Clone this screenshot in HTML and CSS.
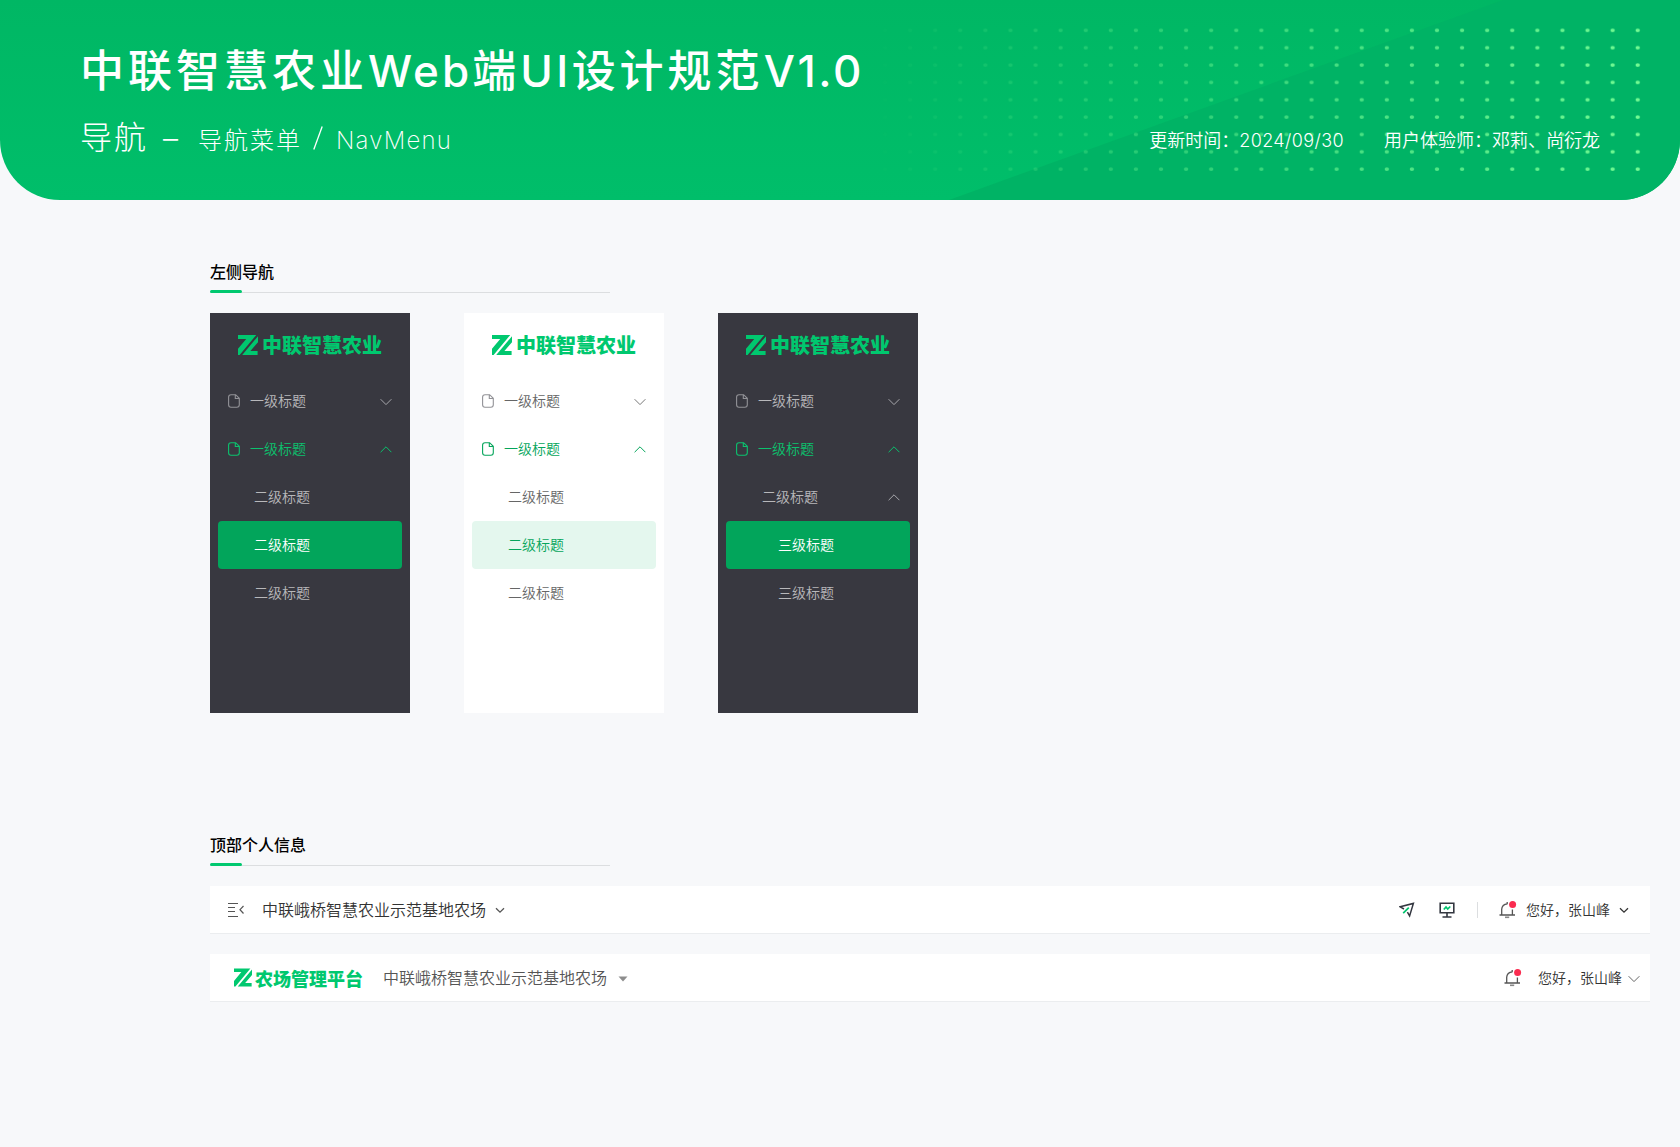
FILE: index.html
```html
<!DOCTYPE html>
<html lang="zh-CN">
<head>
<meta charset="utf-8">
<title>导航菜单 / NavMenu</title>
<link rel="stylesheet" href="styles.css">
</head>
<body>
<svg width="0" height="0" class="defs" aria-hidden="true">
  <symbol id="mark" viewBox="0 0 20 20"><path d="M0 0H18.2L1.6 20H0V13.8L8.2 4H0ZM20 1.2V7.2L12.4 16H19.6V20H4.2Z"/></symbol>
  <symbol id="doc" viewBox="0 0 14 16"><path d="M4 1.7H8.6L12.3 5.3V11.8Q12.3 14.3 9.8 14.3H4Q1.6 14.3 1.6 11.8V4.1Q1.6 1.7 4 1.7ZM8.3 1.8V5.5H12.2" fill="none" stroke="currentColor" stroke-width="1.1"/></symbol>
  <symbol id="down" viewBox="0 0 12 8"><path d="M.6 1.2 6 6.6 11.4 1.2" fill="none" stroke="currentColor"/></symbol>
  <symbol id="down-bold" viewBox="0 0 10 7"><path d="M1 1.2 5 5.2 9 1.2" fill="none" stroke="currentColor" stroke-width="1.3"/></symbol>
  <symbol id="up" viewBox="0 0 12 8"><path d="M.6 6.2 6 .8 11.4 6.2" fill="none" stroke="currentColor"/></symbol>
  <symbol id="bell" viewBox="0 0 18 18"><path d="M.5 14H16M2.7 14V8.2Q2.9 3.4 8.5 2.8M13.4 14V8.5M8.2 1V3" fill="none" stroke="#555" stroke-width="1.3"/><path d="M6 16.3H10.2" stroke="#888" stroke-width="1.6"/><circle cx="13.6" cy="3.6" r="3.5" fill="#fa2c50"/></symbol>
</svg>
<header class="banner">
  <svg class="pattern" viewBox="0 0 1680 200">
    <defs>
      <linearGradient id="fade" gradientUnits="userSpaceOnUse" x1="870" y1="0" x2="1640" y2="0"><stop offset="0" stop-color="#fff" stop-opacity="0"/><stop offset="1" stop-color="#fff"/></linearGradient>
      <mask id="m" maskUnits="userSpaceOnUse" x="860" y="0" width="820" height="200"><rect x="860" width="820" height="200" fill="url(#fade)"/></mask>
      <pattern id="dots" patternUnits="userSpaceOnUse" x="872.5" y="21.6" width="25.09" height="17.35"><ellipse cx="12.5" cy="8.7" rx="2.2" ry="1.8" fill="#73fb93"/></pattern>
    </defs>
    <path d="M949 200 1503 0H1680V200Z" fill="#00b365"/>
    <rect x="872.5" y="21.6" width="777.7" height="156.1" fill="url(#dots)" mask="url(#m)"/>
  </svg>
  <h1>中联智慧农业<span class="web">Web</span>端<span class="ui">UI</span>设计规范<span class="ver">V1.0</span></h1>
  <div class="subline">
    <p class="crumb"><span class="big">导航</span><span class="dash">–</span><span>导航菜单</span><svg class="slash" viewBox="0 0 10 24"><path d="M.8 23.5 9.2.5" stroke="#fff" stroke-width="1.3"/></svg><span class="nav">NavMenu</span></p>
    <p class="meta"><span>更新时间：<span class="date">2024/09/30</span></span><span class="author">用户体验师：邓莉、尚衍龙</span></p>
  </div>
</header>
<main>
  <section class="side">
    <h2>左侧导航</h2>
    <div class="menus">
      <nav class="menu dark">
        <div class="logo"><svg><use href="#mark"/></svg><b>中联智慧农业</b></div>
        <div class="item"><svg class="doc"><use href="#doc"/></svg>一级标题<svg class="arrow"><use href="#down"/></svg></div>
        <div class="item open"><svg class="doc"><use href="#doc"/></svg>一级标题<svg class="arrow"><use href="#up"/></svg></div>
        <div class="item second">二级标题</div>
        <div class="item second active">二级标题</div>
        <div class="item second">二级标题</div>
      </nav>
      <nav class="menu light">
        <div class="logo"><svg><use href="#mark"/></svg><b>中联智慧农业</b></div>
        <div class="item"><svg class="doc"><use href="#doc"/></svg>一级标题<svg class="arrow"><use href="#down"/></svg></div>
        <div class="item open"><svg class="doc"><use href="#doc"/></svg>一级标题<svg class="arrow"><use href="#up"/></svg></div>
        <div class="item second">二级标题</div>
        <div class="item second active">二级标题</div>
        <div class="item second">二级标题</div>
      </nav>
      <nav class="menu dark">
        <div class="logo"><svg><use href="#mark"/></svg><b>中联智慧农业</b></div>
        <div class="item"><svg class="doc"><use href="#doc"/></svg>一级标题<svg class="arrow"><use href="#down"/></svg></div>
        <div class="item open"><svg class="doc"><use href="#doc"/></svg>一级标题<svg class="arrow"><use href="#up"/></svg></div>
        <div class="item second">二级标题<svg class="arrow"><use href="#up"/></svg></div>
        <div class="item third active">三级标题</div>
        <div class="item third">三级标题</div>
      </nav>
    </div>
  </section>
  <section class="top">
    <h2>顶部个人信息</h2>
    <div class="bar first">
      <svg class="fold" viewBox="0 0 18 16"><path d="M1 1.5H11M1 5.5H8M1 9.5H8M1 14.5H11M16.5 4 13 7.7 16.5 11.5" fill="none" stroke="#555" stroke-width="1.2"/></svg>
      <span class="farm">中联峨桥智慧农业示范基地农场</span>
      <svg class="caret"><use href="#down-bold"/></svg>
      <svg class="plane" viewBox="0 0 16 16"><path d="M5 7 1.2 4.8 14.4 1.4 10.6 14 8.4 10.2" fill="none" stroke="#333740" stroke-width="1.5"/><path d="M4.2 11.2 9.8 5.6" stroke="#00c46e" stroke-width="1.7"/></svg>
      <svg class="screen" viewBox="0 0 16 16"><path d="M1.2 1.2H14.8V10.8H1.2ZM8 11V15M3.5 15H12.5" fill="none" stroke="#333740" stroke-width="1.6"/><path d="M4.8 7.5 7 5 8.7 7 11.3 4.5" fill="none" stroke="#00c46e" stroke-width="1.7"/></svg>
      <i class="divider"></i>
      <svg class="bell"><use href="#bell"/></svg>
      <span class="user">您好，张山峰</span>
      <svg class="ucaret"><use href="#down-bold"/></svg>
    </div>
    <div class="bar last">
      <div class="logo"><svg><use href="#mark"/></svg><b>农场管理平台</b></div>
      <span class="farm">中联峨桥智慧农业示范基地农场</span>
      <svg class="tri" viewBox="0 0 10 6"><path d="M.5.5H9.5L5 5.5Z" fill="#8d8d8d"/></svg>
      <svg class="bell"><use href="#bell"/></svg>
      <span class="user">您好，张山峰</span>
      <svg class="ucaret"><use href="#down"/></svg>
    </div>
  </section>
</main>
</body>
</html>
```
FILE: styles.css
```css
* { box-sizing: border-box; }
body, h1, h2, p { margin: 0; }
body {
  min-height: 1147px;
  background: #f7f8fa;
  color: #333;
  font: 350 14px/20px "Noto Sans CJK SC", sans-serif;
}
.defs { position: absolute; }
svg { display: block; flex: none; }

.banner {
  position: relative;
  height: 200px;
  padding: 38px 80px 0;
  overflow: hidden;
  border-radius: 0 0 60px 60px;
  background: linear-gradient(#00b764, #00be6a);
  color: #fff;
}
.pattern { position: absolute; inset: 0; width: 1680px; height: 200px; }
h1 {
  position: relative;
  font-size: 44px;
  line-height: 60px;
  font-weight: 500;
  letter-spacing: 4px;
  white-space: nowrap;
}
.web, .ui, .ver { font-family: Inter, sans-serif; font-weight: 500; }
.web { letter-spacing: 3.1px; }
.ui { letter-spacing: 3.4px; }
.ver { letter-spacing: 2.6px; }
.subline { position: relative; display: flex; justify-content: space-between; margin-top: 12px; }
.crumb { display: flex; align-items: baseline; font-size: 24px; line-height: 44px; font-weight: 300; letter-spacing: 2px; }
.crumb .big { font-size: 32px; }
.crumb .dash { width: 35px; margin-left: 15px; font-family: Inter, sans-serif; font-size: 30px; }
.crumb .slash { width: 10px; height: 24px; margin: 0 13px 0 11px; align-self: center; }
.nav { font-family: Inter, sans-serif; font-weight: 250; letter-spacing: 1.2px; }
.meta { display: flex; gap: 40px; padding-top: 6px; font-size: 18px; line-height: 40px; font-weight: 350; }
.date { font-family: Inter, sans-serif; font-weight: 300; letter-spacing: .4px; }

main { padding: 62px 30px 0 210px; }
h2 {
  position: relative;
  width: 400px;
  height: 31px;
  border-bottom: 1px solid #dcdee0;
  color: #000;
  font-size: 16px;
  line-height: 18px;
  font-weight: 500;
}
h2::after {
  content: "";
  position: absolute;
  left: 0;
  bottom: -1px;
  width: 32px;
  height: 3px;
  border-radius: 2px;
  background: #00c86f;
}
.menus { display: flex; gap: 54px; margin-top: 20px; }
.menu { width: 200px; height: 400px; padding: 0 8px; }
.dark { background: #383840; color: #b8b8bb; }
.light { background: #fff; color: #666; }
.logo { display: flex; align-items: center; color: #00c86f; fill: #00c86f; }
.logo svg { width: 20px; height: 20px; }
.logo b { font-size: 20px; font-weight: 900; white-space: nowrap; }
.menu .logo { height: 64px; padding-left: 20px; gap: 4px; }
.menu .doc { width: 14px; height: 16px; margin: 2px 9px 0 0; color: #929297; }
.item { display: flex; align-items: center; height: 48px; padding: 0 10px 2px 9px; border-radius: 4px; }
.arrow { width: 12px; height: 8px; margin: 3px 0 0 auto; color: #a8a8ac; }
.light .arrow { color: #777; }
.second { padding-left: 36px; }
.third { padding-left: 52px; }
.dark .open, .dark .open svg { color: #0bc26e; }
.light .open, .light .open svg { color: #05a55b; }
.dark .active { background: #02a55b; color: #fff; }
.light .active { background: #e4f7ee; color: #05a55b; }

.top { margin-top: 122px; }
.bar { display: flex; align-items: center; height: 48px; border-bottom: 1px solid #ebedef; background: #fff; }
.bar.first { margin-top: 20px; padding: 0 21px 0 17px; }
.bar.last { margin-top: 20px; padding: 0 10px 0 24px; }
.farm, .user { padding-bottom: 1px; }
.farm { font-size: 16px; }
.fold { width: 18px; height: 16px; margin-right: 17px; }
.caret { width: 10px; height: 7px; margin: 2px 0 0 9px; color: #555; }
.plane { width: 16px; height: 16px; margin-left: auto; }
.screen { width: 16px; height: 16px; margin-left: 24px; }
.divider { width: 1px; height: 16px; margin: 0 21px 0 22px; background: #dcdee0; }
.bell { width: 18px; height: 18px; }
.first .user { margin-left: 9px; }
.first .ucaret { width: 10px; height: 7px; margin: 2px 0 0 9px; color: #333; }
.last .logo svg { width: 18px; height: 19px; }
.last .logo b { font-size: 18px; }
.last .logo { gap: 3px; }
.last .farm { margin-left: 20px; color: #555; }
.tri { width: 10px; height: 6px; margin: 2px 0 0 11px; }
.last .bell { margin-left: auto; }
.last .user { margin-left: 16px; }
.last .ucaret { width: 12px; height: 8px; margin: 2px 0 0 6px; color: #666; }
```
